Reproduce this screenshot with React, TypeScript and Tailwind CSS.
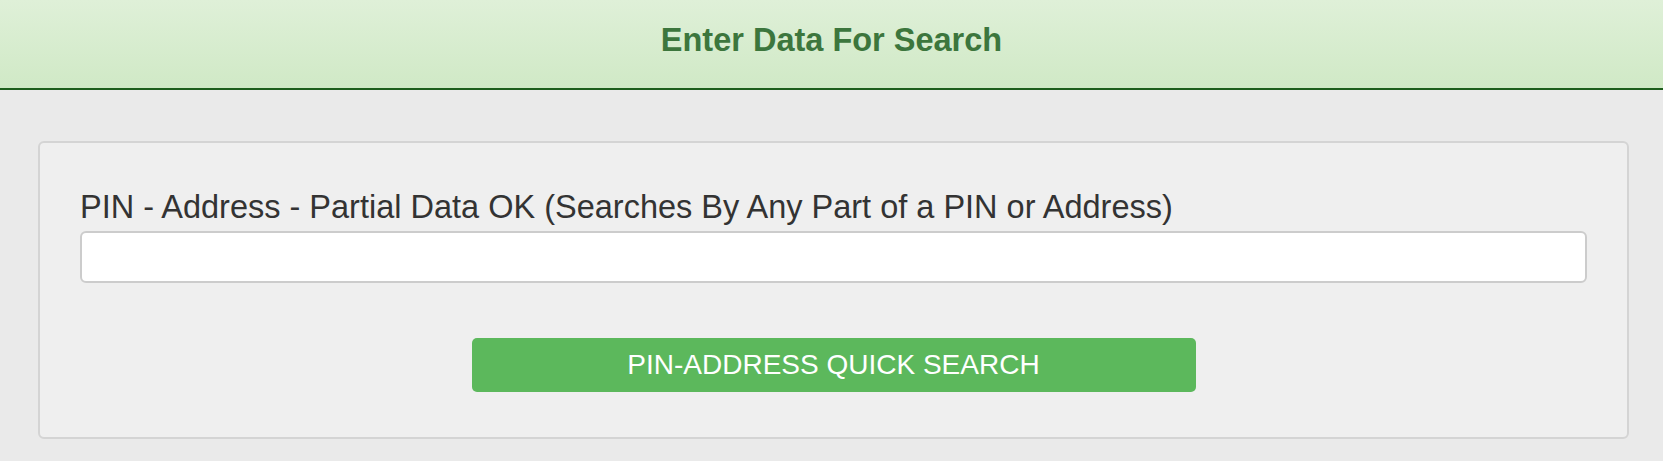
import React from "react";

export default function App() {
    return (
        <div className="min-h-[461px] bg-[#eaeaea] font-['Liberation_Sans',Arial,sans-serif]">
            {/* Header */}
            <div className="h-[90px] border-b-2 border-[#1d5e1d] bg-gradient-to-b from-[#dff0d8] to-[#d0e9c6] pt-[24px]">
                <h1 className="text-center text-[32.5px] leading-[32px] font-bold text-[#3c763d]">
                    Enter Data For Search
                </h1>
            </div>

            {/* Search panel */}
            <div className="pl-[38px] pr-[34px] pt-[51px]">
                <div className="rounded-[6px] border-2 border-[#d4d4d4] bg-[#efefef] px-[40px] pt-[44px] pb-[45px]">
                    <label className="block text-[32.5px] leading-[40px] text-[#333333] mb-[4px]">
                        PIN - Address - Partial Data OK (Searches By Any Part of a PIN or Address)
                    </label>
                    <input
                        type="text"
                        className="block w-full h-[52px] rounded-[6px] border-2 border-[#cccccc] bg-white px-3 text-[27px] text-[#555] outline-none"
                    />
                    <div className="flex justify-center mt-[55px]">
                        <button
                            type="button"
                            className="w-[724px] h-[54px] rounded-[5px] bg-[#5cb85c] text-[28px] leading-none text-white uppercase"
                        >
                            PIN-Address Quick Search
                        </button>
                    </div>
                </div>
            </div>
        </div>
    );
}
